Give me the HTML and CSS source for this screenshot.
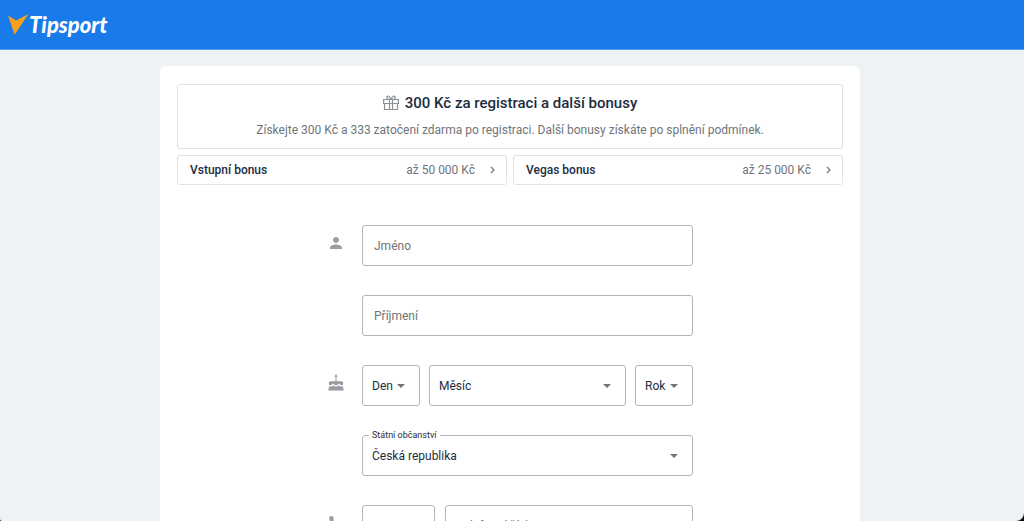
FILE: index.html
```html
<!DOCTYPE html>
<html lang="cs">
<head>
    <meta charset="UTF-8">
    <meta name="viewport" content="width=device-width, initial-scale=1.0">
    <title>Registrace | Tipsport</title>
    <link rel="stylesheet" href="styles.css">
</head>
<body>
    <div class="window">
        <header class="header">
            <a class="logo" href="#">
                <svg class="logo-mark" viewBox="0 0 21 21" aria-hidden="true">
                    <path fill="#f9a01b" d="M0 1.5 8.2 6.6 20.5 0 6.6 20.8Z"/>
                </svg>
                <span class="logo-text">Tipsport</span>
            </a>
        </header>

        <div class="content">
            <main class="card">
                <section class="promo">
                    <h1 class="promo-title">
                        <svg class="promo-icon" viewBox="0 0 16 16" aria-hidden="true">
                            <path fill="none" stroke="#8d9297" stroke-width="1.200" d="M.6 4.500h14.800v4H.6zM1.500 8.500v6h13v-6M6.500 4.500v10M9.500 4.500v10M7.500 4.500C4 4.500 3.500 3 3.800 2 4.300.5 6.500.5 7.800 4.200M8.500 4.500C12 4.500 12.500 3 12.200 2 11.700.5 9.500.5 8.200 4.200"/>
                        </svg>
                        300 Kč za registraci a další bonusy
                    </h1>
                    <p class="promo-text">Získejte 300 Kč a 333 zatočení zdarma po registraci. Další bonusy získáte po splnění podmínek.</p>
                </section>

                <div class="bonuses">
                    <button class="bonus" type="button">
                        <span class="bonus-name">Vstupní bonus</span>
                        <span class="bonus-value">až 50 000 Kč</span>
                        <svg class="bonus-arrow" viewBox="0 0 6 8" aria-hidden="true"><path d="m1 1 3 3-3 3"/></svg>
                    </button>
                    <button class="bonus" type="button">
                        <span class="bonus-name">Vegas bonus</span>
                        <span class="bonus-value">až 25 000 Kč</span>
                        <svg class="bonus-arrow" viewBox="0 0 6 8" aria-hidden="true"><path d="m1 1 3 3-3 3"/></svg>
                    </button>
                </div>

                <form class="form">
                    <div class="row">
                        <svg class="row-icon" viewBox="0 0 24 24" aria-hidden="true">
                            <path d="M12 12c2.210 0 4-1.790 4-4s-1.790-4-4-4-4 1.790-4 4 1.790 4 4 4zm0 2c-2.670 0-8 1.340-8 4v2h16v-2c0-2.660-5.330-4-8-4z"/>
                        </svg>
                        <input class="field" type="text" placeholder="Jméno" aria-label="Jméno">
                    </div>

                    <div class="row">
                        <span></span>
                        <input class="field" type="text" placeholder="Příjmení" aria-label="Příjmení">
                    </div>

                    <div class="row">
                        <svg class="row-icon" viewBox="0 0 24 24" aria-hidden="true">
                            <path d="M12 5c1 0 1.700-.8 1.700-1.700 0-.4-.1-.7-.3-1L12 0l-1.400 2.300c-.2.300-.3.600-.3 1C10.300 4.200 11 5 12 5zM11.200 6h1.600v3.500H19c1.600 0 2.500.9 2.500 2.500v2c-1 1.300-3 1.300-4.200 0L16 12.700 14.700 14c-1.400 1.300-4 1.300-5.400 0L8 12.700 6.700 14c-1.200 1.300-3.200 1.300-4.200 0v-2c0-1.600.9-2.500 2.500-2.500h6.200z"/>
                            <path d="M2.500 16.300c1.900.8 4 .4 5.500-.9 2.200 1.700 5.800 1.700 8 0 1.500 1.300 3.600 1.700 5.500.9v3.200h.7V22H1.800v-2.500h.7z"/>
                        </svg>
                        <div class="birth">
                            <div class="select">
                                <select class="field" aria-label="Den"><option>Den</option></select>
                                <svg class="caret" viewBox="0 0 8 4" aria-hidden="true"><path d="M0 0h8L4 4z"/></svg>
                            </div>
                            <div class="select">
                                <select class="field" aria-label="Měsíc"><option>Měsíc</option></select>
                                <svg class="caret" viewBox="0 0 8 4" aria-hidden="true"><path d="M0 0h8L4 4z"/></svg>
                            </div>
                            <div class="select">
                                <select class="field" aria-label="Rok"><option>Rok</option></select>
                                <svg class="caret" viewBox="0 0 8 4" aria-hidden="true"><path d="M0 0h8L4 4z"/></svg>
                            </div>
                        </div>
                    </div>

                    <div class="row">
                        <span></span>
                        <div class="select">
                            <label class="field-label" for="citizenship">Státní občanství</label>
                            <select class="field" id="citizenship"><option>Česká republika</option></select>
                            <svg class="caret" viewBox="0 0 8 4" aria-hidden="true"><path d="M0 0h8L4 4z"/></svg>
                        </div>
                    </div>

                    <div class="row">
                        <svg class="row-icon" viewBox="0 0 24 24" aria-hidden="true">
                            <path d="M6.620 10.790c1.440 2.830 3.760 5.140 6.590 6.590l2.200-2.200c.27-.27.67-.36 1.020-.24 1.120.370 2.330.570 3.570.570.55 0 1 .45 1 1V20c0 .55-.45 1-1 1-9.390 0-17-7.610-17-17 0-.55.45-1 1-1h3.500c.55 0 1 .45 1 1 0 1.250.2 2.450.57 3.570.11.350.03.740-.25 1.020l-2.200 2.200z"/>
                        </svg>
                        <div class="phone">
                            <div class="select">
                                <select class="field" aria-label="Předvolba"><option>+420</option></select>
                                <svg class="caret" viewBox="0 0 8 4" aria-hidden="true"><path d="M0 0h8L4 4z"/></svg>
                            </div>
                            <input class="field" type="tel" placeholder="Telefonní číslo" aria-label="Telefonní číslo">
                        </div>
                    </div>
                </form>
            </main>
        </div>
    </div>
</body>
</html>
```
FILE: styles.css
```css
* {
    box-sizing: border-box;
}

body {
    margin: 0;
    background-color: #16070a;
    color: #1c2d41;
    font-family: Roboto, "Liberation Sans", sans-serif;
    font-size: 12px;
    line-height: 16px;
}

/* Scrolling page with rounded bottom corners */
.window {
    height: 100vh;
    overflow: hidden auto;
    scrollbar-width: none;
    border-radius: 0 0 8px 2px;
    background-color: #edf2f4;
}

/* --- Header --- */
.header {
    display: flex;
    align-items: center;
    height: 50px;
    padding: 0 8px;
    background-color: #197aea;
    border-bottom: 1px solid #5c9fec;
}

.logo {
    display: flex;
    align-items: center;
    color: #fff;
    text-decoration: none;
}

.logo-mark {
    width: 21px;
    height: 21px;
}

.logo-text {
    font-family: Lato, "Open Sans", sans-serif;
    font-size: 22px;
    font-style: italic;
    font-weight: 900;
    line-height: 24px;
}

/* --- Card --- */
.content {
    padding: 16px 20px 16px 16px;
}

.card {
    max-width: 700px;
    margin: 0 auto;
    padding: 18px 17px;
    border-radius: 6px;
    background-color: #fff;
}

.promo {
    padding: 8px 12px 10px;
    border: 1px solid #e0e3e5;
    border-radius: 3px;
    text-align: center;
}

.promo-title {
    display: flex;
    align-items: center;
    justify-content: center;
    gap: 6px;
    margin: 0 0 9px;
    font-size: 15px;
    font-weight: 500;
    line-height: 20px;
}

.promo-icon {
    width: 16px;
    height: 16px;
}

.promo-text {
    margin: 0;
    color: #707579;
}

/* --- Bonuses --- */
.bonuses {
    display: flex;
    gap: 6px;
    margin-top: 6px;
}

.bonus {
    display: flex;
    flex: 1;
    align-items: center;
    height: 30px;
    padding: 0 10px 0 12px;
    border: 1px solid #e0e3e5;
    border-radius: 3px;
    background-color: #fff;
    color: inherit;
    font: inherit;
    cursor: pointer;
}

.bonus-name {
    font-weight: 500;
}

.bonus-value {
    margin-left: auto;
    color: #707579;
}

.bonus-arrow {
    width: 6px;
    height: 8px;
    margin-left: 15px;
    fill: none;
    stroke: #707579;
    stroke-width: 1.200;
}

/* --- Form --- */
.form {
    display: flex;
    flex-direction: column;
    gap: 29px;
    max-width: 366px;
    margin: 40px auto 0;
}

.row {
    display: grid;
    grid-template-columns: 18px 1fr;
    column-gap: 17px;
}

.row-icon {
    width: 18px;
    height: 18px;
    margin-top: 9px;
    fill: #989ca3;
}

.field {
    width: 100%;
    min-width: 0;
    height: 41px;
    padding: 0 11px;
    border: 1px solid #b3b6b9;
    border-radius: 3px;
    background-color: #fff;
    color: #1c2d41;
    font: inherit;
    appearance: none;
}

.field::placeholder {
    color: #707579;
    opacity: 1;
}

/* The caret shares one grid cell with the select */
.select {
    position: relative;
    display: grid;
    align-items: center;
}

.select .field {
    grid-area: 1 / 1;
    padding: 0 9px;
}

.caret {
    grid-area: 1 / 1;
    justify-self: end;
    width: 8px;
    height: 4px;
    margin-right: 15px;
    fill: #707579;
    pointer-events: none;
}

.field-label {
    position: absolute;
    top: -6px;
    left: 7px;
    z-index: 1;
    padding: 0 3px;
    background-color: #fff;
    font-size: 9px;
    line-height: 12px;
}

.birth {
    display: grid;
    grid-template-columns: 58px 1fr 58px;
    gap: 9px;
}

.phone {
    display: grid;
    grid-template-columns: 73px 1fr;
    gap: 10px;
}
```
